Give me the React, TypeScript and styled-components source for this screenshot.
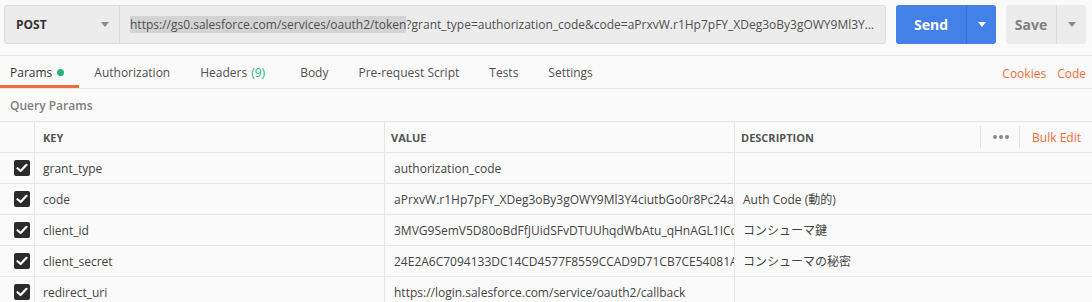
import React from "react";
import styled, { createGlobalStyle } from "styled-components";

const Global = createGlobalStyle`
  html, body { margin: 0; padding: 0; background: #fafafa; }
  body { font-family: "Open Sans", "Noto Sans CJK JP", sans-serif; -webkit-font-smoothing: antialiased; }
  * { box-sizing: border-box; }
`;

const Page = styled.div`
  width: 1092px;
  height: 302px;
  overflow: hidden;
  background: #fafafa;
  display: flex;
  flex-direction: column;
  & > * { flex: none; }
`;

const TopBar = styled.div`
  height: 56px;
  padding: 5px 6px 0 4px;
  display: flex;
  align-items: flex-start;
  border-bottom: 1px solid #e6e6e6;
`;

const InputGroup = styled.div`
  display: flex;
  height: 39px;
  width: 882px;
  border: 1px solid #dcdcdc;
  border-radius: 3px;
  background: #ececec;
`;

const Method = styled.div`
  width: 115px;
  flex: none;
  display: flex;
  align-items: center;
  justify-content: space-between;
  padding: 0 10px 0 11px;
  border-right: 1px solid #dcdcdc;
  font-size: 12px;
  font-weight: 700;
  color: #333;
`;

const Caret = styled.span<{ $color: string }>`
  width: 0;
  height: 0;
  border-left: 4px solid transparent;
  border-right: 4px solid transparent;
  border-top: 5px solid ${(p) => p.$color};
`;

const Url = styled.div`
  flex: 1;
  min-width: 0;
  display: flex;
  align-items: center;
  padding: 0 9px 0 10px;
  font-size: 12px;
  color: #505050;
  white-space: nowrap;
  overflow: hidden;
  line-height: 18px;
  & > span { display: block; overflow: hidden; text-overflow: ellipsis; }
`;

const Selected = styled.mark`
  background: #d3d3d3;
  color: #505050;
`;

const SplitButton = styled.div<{ $bg: string; $w: number; $main: number; $line: string }>`
  margin-left: 10px;
  width: ${(p) => p.$w}px;
  height: 39px;
  display: grid;
  grid-template-columns: ${(p) => p.$main}px 1fr;
  background: ${(p) => p.$bg};
  border-radius: 3px;
  & > div + div { border-left: 1px solid ${(p) => p.$line}; }
`;

const BtnPart = styled.div<{ $color: string }>`
  display: flex;
  align-items: center;
  justify-content: center;
  font-size: 14px;
  font-weight: 700;
  color: ${(p) => p.$color};
`;

const Tabs = styled.div`
  height: 33px;
  display: flex;
  align-items: stretch;
  border-bottom: 1px solid #e6e6e6;
`;

const Tab = styled.div<{ $active?: boolean }>`
  display: flex;
  align-items: center;
  padding: 0 15px;
  font-size: 12px;
  color: ${(p) => (p.$active ? "#333" : "#505050")};
  border-bottom: 3px solid ${(p) => (p.$active ? "#f26b3a" : "transparent")};
  padding-top: 3px;
  &:first-child { padding-left: 10px; }
`;

const Dot = styled.span`
  width: 7px;
  height: 7px;
  border-radius: 50%;
  background: #26b47f;
  margin-left: 5px;
`;

const Count = styled.span`
  color: #26b47f;
  margin-left: 4px;
  margin-right: 5px;
`;

const Spacer = styled.div`
  flex: 1;
`;

const LinkTab = styled.div`
  display: flex;
  align-items: center;
  font-size: 12px;
  color: #f26b3a;
  padding: 3px 0 0 0;
  margin-right: 11px;
  &:last-child { margin-right: 6px; }
`;

const SectionTitle = styled.div`
  height: 32px;
  display: flex;
  align-items: center;
  padding-left: 10px;
  font-size: 12px;
  font-weight: 600;
  color: #808080;
`;

const Table = styled.div`
  display: grid;
  grid-template-columns: 34px 350px 350px 1fr;
  grid-auto-rows: 31px;
  border-top: 1px solid #e6e6e6;
  background: #fafafa;
`;

const Cell = styled.div<{ $head?: boolean; $pad?: number }>`
  display: flex;
  align-items: center;
  min-width: 0;
  overflow: hidden;
  white-space: nowrap;
  padding-left: ${(p) => p.$pad ?? 8}px;
  border-bottom: 1px solid #e6e6e6;
  border-left: 1px solid #e6e6e6;
  font-size: ${(p) => (p.$head ? "11px" : "12px")};
  font-weight: ${(p) => (p.$head ? 700 : 400)};
  color: ${(p) => (p.$head ? "#555" : "#444")};
  &:nth-child(4n + 1) { border-left: none; }
`;

const CheckCell = styled(Cell)`
  padding-left: 14px;
`;

const Check = styled.span`
  width: 16px;
  height: 16px;
  border-radius: 2px;
  background: #2b2b2b;
  display: flex;
  align-items: center;
  justify-content: center;
`;

const DescHead = styled(Cell)`
  justify-content: space-between;
  padding-right: 11px;
`;

const HeadTools = styled.div`
  display: flex;
  align-items: center;
  height: 100%;
`;

const ToolSep = styled.span`
  width: 1px;
  height: 22px;
  background: #e3e3e3;
`;

const Dots = styled.span`
  display: flex;
  gap: 2px;
  padding: 0 10px 0 12px;
  & > i { width: 4px; height: 4px; border-radius: 50%; background: #888; display: block; }
`;

const BulkEdit = styled.span`
  margin-left: 12px;
  font-size: 12px;
  font-weight: 400;
  color: #f26b3a;
`;

const CheckMark = () => (
  <svg width="12" height="10" viewBox="0 0 12 10">
    <path d="M1.5 5.2 L4.6 8 L10.5 1.8" fill="none" stroke="#fff" strokeWidth="2.2" strokeLinecap="round" strokeLinejoin="round" />
  </svg>
);

const rows: [string, string, string][] = [
  ["grant_type", "authorization_code", ""],
  ["code", "aPrxvW.r1Hp7pFY_XDeg3oBy3gOWY9Ml3Y4ciutbGo0r8Pc24aXyZ", "Auth Code (動的)"],
  ["client_id", "3MVG9SemV5D80oBdFfJUidSFvDTUUhqdWbAtu_qHnAGL1ICqRst", "コンシューマ鍵"],
  ["client_secret", "24E2A6C7094133DC14CD4577F8559CCAD9D71CB7CE54081A", "コンシューマの秘密"],
  ["redirect_uri", "https://login.salesforce.com/service/oauth2/callback", ""],
];

export default function App() {
  return (
    <Page>
      <Global />
      <TopBar>
        <InputGroup>
          <Method>
            POST
            <Caret $color="#8a8a8a" />
          </Method>
          <Url>
            <span>
              <Selected>https://gs0.salesforce.com/services/oauth2/token</Selected>
              ?grant_type=authorization_code&amp;code=aPrxvW.r1Hp7pFY_XDeg3oBy3gOWY9Ml3Y4ciutbGo0r8Pc24
            </span>
          </Url>
        </InputGroup>
        <SplitButton $bg="#4381e8" $w={100} $main={70} $line="#3a72d4">
          <BtnPart $color="#fff">Send</BtnPart>
          <BtnPart $color="#fff">
            <Caret $color="#fff" />
          </BtnPart>
        </SplitButton>
        <SplitButton $bg="#ececec" $w={80} $main={50} $line="#dcdcdc">
          <BtnPart $color="#808080">Save</BtnPart>
          <BtnPart $color="#808080">
            <Caret $color="#8a8a8a" />
          </BtnPart>
        </SplitButton>
      </TopBar>
      <Tabs>
        <Tab $active>
          Params
          <Dot />
        </Tab>
        <Tab>Authorization</Tab>
        <Tab>
          Headers<Count>(9)</Count>
        </Tab>
        <Tab>Body</Tab>
        <Tab>Pre-request Script</Tab>
        <Tab>Tests</Tab>
        <Tab>Settings</Tab>
        <Spacer />
        <LinkTab>Cookies</LinkTab>
        <LinkTab>Code</LinkTab>
      </Tabs>
      <SectionTitle>Query Params</SectionTitle>
      <Table>
        <Cell $head />
        <Cell $head>KEY</Cell>
        <Cell $head $pad={6}>VALUE</Cell>
        <DescHead $head $pad={6}>
          DESCRIPTION
          <HeadTools>
            <ToolSep />
            <Dots>
              <i />
              <i />
              <i />
            </Dots>
            <ToolSep />
            <BulkEdit>Bulk Edit</BulkEdit>
          </HeadTools>
        </DescHead>
        {rows.map(([k, v, d]) => (
          <React.Fragment key={k}>
            <CheckCell>
              <Check>
                <CheckMark />
              </Check>
            </CheckCell>
            <Cell>{k}</Cell>
            <Cell $pad={9}>{v}</Cell>
            <Cell>{d}</Cell>
          </React.Fragment>
        ))}
      </Table>
    </Page>
  );
}
